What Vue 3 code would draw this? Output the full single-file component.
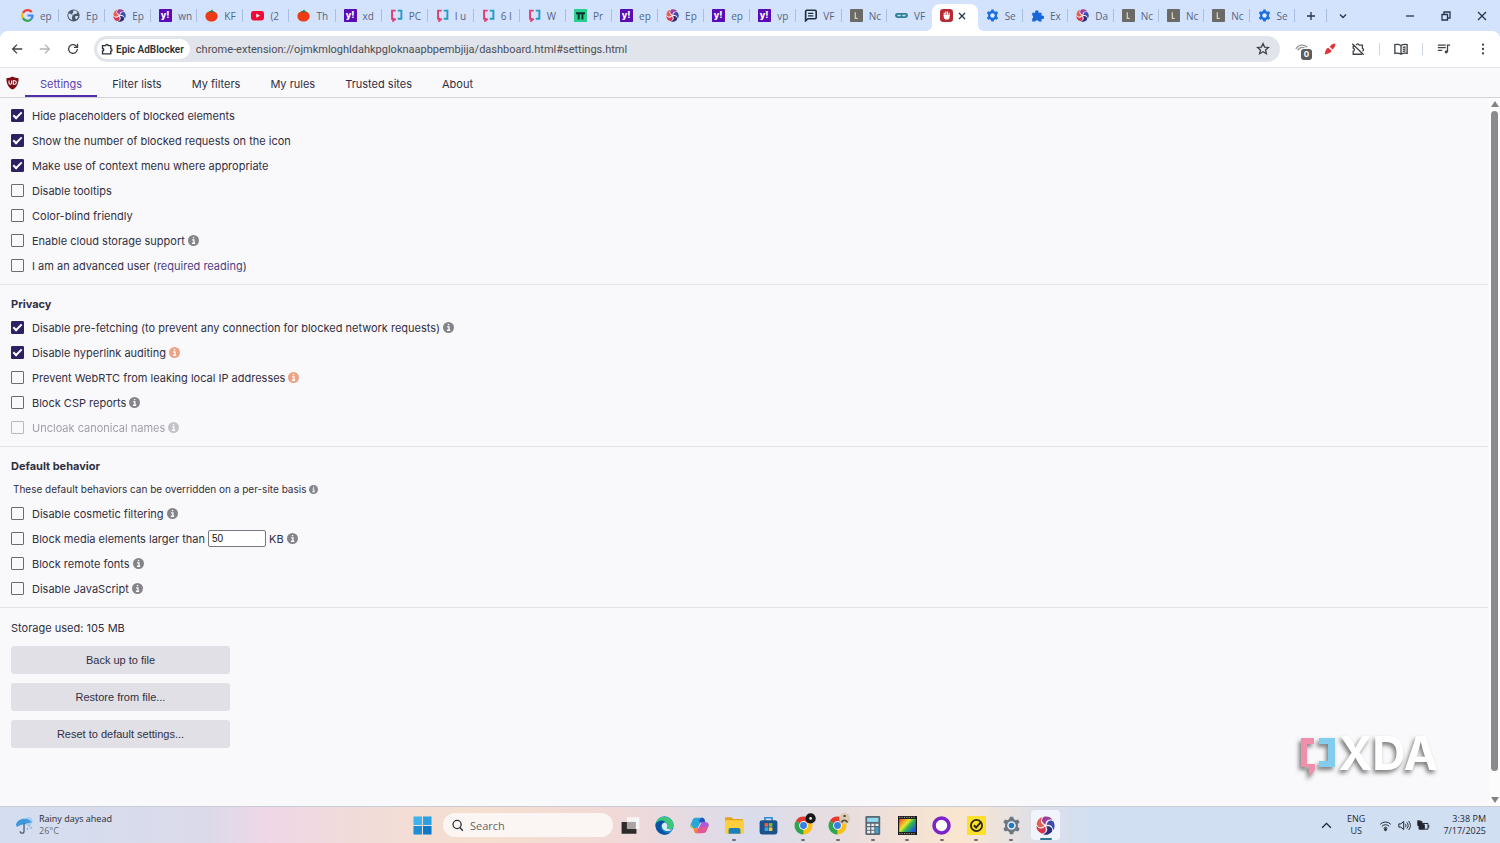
<script setup>
import { ref } from 'vue'

const arm = 'M8 7C4.700 5.600 4.200 2.600 6.600.6 9.800 0 12.600 1 13.800 3.200 10.500 2.300 8 3.800 8 7z'
const epic = `<circle cx="8" cy="8" r="7" fill="#f6eef5"/>` + ['#9b3f9c', '#3c4cb0', '#2a2f7c', '#d8344c', '#e6604f']
  .map((fill, i) => `<path d="${arm}" fill="${fill}" transform="rotate(${i * 72} 8 8)"/>`).join('')
const chrome = `<path d="M8 8 1.500 4.200a7.500 7.500 0 0 1 13 0z" fill="#e33b2e"/><path d="M8 8l6.500-3.800A7.500 7.500 0 0 1 8 15.500z" fill="#fbc116"/><path d="M8 8v7.500a7.500 7.500 0 0 1-6.500-11.300z" fill="#2da44e"/><circle cx="8" cy="8" r="3.700" fill="#fff"/><circle cx="8" cy="8" r="2.900" fill="#3b7de8"/>`

const art = {
  google: `<path d="M13.300 3.800A6.700 6.700 0 0 0 2.300 4.900" fill="none" stroke="#ea4335" stroke-width="2.800"/><path d="M2.300 4.900a6.600 6.600 0 0 0 0 6.200" fill="none" stroke="#fbbc05" stroke-width="2.800"/><path d="M2.300 11.100a6.500 6.500 0 0 0 9.700 2" fill="none" stroke="#34a853" stroke-width="2.800"/><path d="M12 13.100A6.300 6.300 0 0 0 14.200 8H8" fill="none" stroke="#4285f4" stroke-width="2.700"/>`,
  globe: `<circle cx="8" cy="8" r="7.500" fill="#4c5767"/><path d="M2 5.500 5 6l2 2-1 2 .500 3.500C4 13 1.800 11 1.700 8zM7 2.200l3-.4 3 2-1 2-3 .5-1.500 1.500L6 6l2-2zM10 9l3-.5 1 .5-2 3.500-2-1z" fill="#d3e3fd"/>`,
  epic,
  yahoo: `<rect width="16" height="16" rx="1" fill="#5a0bb5"/><text x="2" y="11.500" font-size="11" font-weight="800" fill="#fff" font-family="Inter, sans-serif">y!</text>`,
  tomato: `<path d="M8 3.500c5-1 7.500 1.500 7.500 5.300S12 15.500 8 15.500.5 12.600.5 8.800 3 2.500 8 3.500z" fill="#ef3a16"/><path d="M4 3.200 8 4.600l4-1.200-2.500-1L9 .3 7.300 2.300z" fill="#2f7d3b"/>`,
  youtube: `<rect y="2.500" width="16" height="11.500" rx="3" fill="#f00b36"/><path d="M6.500 5.500 11 8.200l-4.500 2.700z" fill="#fff"/>`,
  xda: `<path d="M7 2H2.500v10H4v2.500L7 12" fill="none" stroke="#e2406f" stroke-width="2.400"/><path d="M9.500 2H14v10H9.500" fill="none" stroke="#269cc4" stroke-width="2.400"/>`,
  pi: `<rect width="16" height="16" fill="#27d08c"/><path d="M2.500 4h11v2.400h-1.900V13H9.200V6.400H7V13H4.600V6.400H2.500z" fill="#10302a"/>`,
  chat: `<path d="M3 1.500h10.500a1.500 1.500 0 0 1 1.500 1.500v7.500a1.500 1.500 0 0 1-1.500 1.500H5l-3 2.500V3z" fill="none" stroke="#20303e" stroke-width="2"/><path d="M5 5.500h6.500M5 8.500h6.500" stroke="#20303e" stroke-width="1.500"/>`,
  note: `<rect width="16" height="16" rx="1" fill="#6b6a66"/><path d="M6.500 4v7.500h3" fill="none" stroke="#d9d3bd" stroke-width="1.500"/>`,
  pill: `<rect y="5" width="16" height="6" rx="3" fill="#2d7f9a"/><path d="M3 8h4M9 8h4" stroke="#bfe3ee" stroke-width="1.800"/>`,
  block: `<rect width="16" height="16" rx="4" fill="#b52a33"/><path d="M5.200 8V5M7.200 7.500V3.500M9.200 7.500V3.500M11.200 8V5" stroke="#fff" stroke-width="1.300" stroke-linecap="round"/><path d="M4.600 7.500h7.200v2.500c0 1.700-1.200 3-3 3H8c-2 0-3.400-1.800-3.400-3z" fill="#fff"/>`,
  gear: `<path d="M6.600.6h2.800l.5 2 1.600.9 2-.6 1.400 2.400-1.500 1.500v2.400l1.500 1.500-1.400 2.400-2-.6-1.600.9-.5 2H6.600l-.5-2-1.600-.9-2 .6-1.400-2.400 1.500-1.500V6.800L1.100 5.300l1.400-2.400 2 .6 1.600-.9z" fill="#1d6fe0"/><circle cx="8" cy="8" r="2.700" fill="#e3edfd"/>`,
  puzzle: `<path d="M1.500 4.500h3.600a2.200 2.200 0 1 1 4.200 0H13v3.700a2.200 2.200 0 1 1 0 4V15.500H9.500a2.200 2.200 0 0 0-4.300 0H1.500v-3.800a2.200 2.200 0 0 0 0-3.900z" fill="#1767d8"/>`,
  taskview: `<rect x="5" y="1" width="10.500" height="10" fill="#f6f4f4"/><path d="M.5 5H5v6h8v4H.5z" fill="#2c2a2b"/><rect x="5" y="5" width="7.500" height="6" fill="#a9a5a5"/>`,
  edge: `<circle cx="8" cy="8" r="7.700" fill="#1580cf"/><path d="M.6 6.500C2 1 8 -.8 12.500 2c3 2 4 5.500 2.500 7.800-1.200 1.600-4.200 1.600-5.200.4 1.400-1.500.8-4.700-2.300-5.200C4.500 4.500 2 5 .6 6.500z" fill="#3cc77c"/><path d="M.5 6.800C2 3.500 7 2.800 9 5.200 5.800 5 4.200 8 5.500 11c1.200 2.500 4 4 7.500 2.800C8 18 0 15 .5 6.800z" fill="#0c52a3"/><path d="M9.700 10.200c1.400-1.400.7-4.400-1.800-4.800C5 6.500 5.200 10.400 8 12c2.300 1.200 5 .9 6.700-.9-1.800.6-4 .4-5-.9z" fill="#dcebf6"/>`,
  copilot: `<path d="M5.500 1.500h4.800c1 0 1.600.6 1.900 1.500l.8 2.500H9L6 10.500H2.500C.5 10.500 0 9 .6 7l1.500-3.700C2.600 2 3.800 1.500 5.500 1.500z" fill="#28a6d9"/><path d="M9.500 1.500c1.500 0 2.300.5 2.700 1.500l.8 2.500H8.800L7.500 4z" fill="#2750c8"/><path d="M10.500 14.500H5.700c-1 0-1.600-.6-1.900-1.500L3 10.500h4L10 5.500h3.500c2 0 2.500 1.500 1.900 3.500l-1.500 3.700c-.5 1.300-1.700 1.800-3.400 1.800z" fill="#e45796"/><path d="M.6 7C0 9 .5 10.500 2.500 10.500h4L5 13.500l-1.200-.5L3 10.500z" fill="#f4c437"/><path d="M10 5.500h3.500c2 0 2.500 1.500 1.900 3.500H8z" fill="#a95ad8"/><path d="M5.700 14.500c-1 0-1.600-.6-1.900-1.500L3 10.500h4z" fill="#f7823c"/>`,
  folder: `<path d="M0 1h5.500L7 2.500h8V13H0z" fill="#e3a51c"/><rect y="3.500" width="16" height="11.500" rx="1" fill="#fdcf3d"/><path d="M3 15v-3.500a1.500 1.500 0 0 1 1.500-1.500h7a1.500 1.500 0 0 1 1.500 1.500V15z" fill="#1c7fb8"/>`,
  store: `<path d="M5 4V1.500h6V4" fill="none" stroke="#2a8fd0" stroke-width="1.400"/><rect x=".5" y="3.500" width="15" height="12" rx="2" fill="#1c528c"/><path d="M4.700 6h3v3h-3z" fill="#ee6144"/><path d="M8.300 6h3v3h-3z" fill="#7fba3e"/><path d="M4.700 9.600h3v3h-3z" fill="#35a9e0"/><path d="M8.300 9.600h3v3h-3z" fill="#fdc931"/>`,
  chromeA: chrome + `<circle cx="14" cy="2" r="4.300" fill="#181818"/><circle cx="14" cy="2" r="1.200" fill="#e8e8e8"/>`,
  chromeB: chrome + `<circle cx="14" cy="2" r="4.600" fill="#d9cbb3"/><path d="M11.500 5.500c.5-2.500 4-2.500 5 0M13 0h2" stroke="#5f5135" stroke-width="1.500" fill="none"/>`,
  calc: `<rect x="2" width="12.500" height="16" rx="1" fill="#5b6873"/><rect x="3.500" y="1.500" width="9.500" height="3.500" fill="#8ed8f0"/><path d="M3.500 6.500h2.500v2H3.500zM7 6.500h2.500v2H7zM3.500 9.500h2.500v2H3.500zM7 9.500h2.500v2H7zM3.500 12.500h2.500v2H3.500zM7 12.500h2.500v2H7zM10.500 6.500H13v2h-2.500z" fill="#e8eef2"/><path d="M10.500 9.500H13v5h-2.500z" fill="#3ba3dc"/>`,
  rainbow: `<defs><linearGradient id="rb" x2="1" y2=".7"><stop stop-color="#f0364c"/><stop offset=".25" stop-color="#f7a01f"/><stop offset=".45" stop-color="#e9e52e"/><stop offset=".65" stop-color="#31b84c"/><stop offset="1" stop-color="#2357d8"/></linearGradient></defs><rect width="16" height="16" fill="#191919"/><rect x="1" y="2.500" width="14" height="11" fill="url(#rb)"/><path d="M1 1.200h14M1 14.800h14" stroke="#999" stroke-dasharray="1 1"/>`,
  ring: `<circle cx="8" cy="8" r="6.300" fill="#fff" stroke="#7b22c9" stroke-width="3"/>`,
  norton: `<rect width="16" height="16" fill="#fbe02c"/><circle cx="8" cy="8" r="4.700" fill="none" stroke="#2b2710" stroke-width="1.500"/><path d="M5.800 7.800 7.700 9.700 12 4.800" fill="none" stroke="#2b2710" stroke-width="1.600"/>`,
  settings: `<path d="M6.600.6h2.800l.5 2 1.600.9 2-.6 1.400 2.400-1.500 1.500v2.400l1.500 1.500-1.400 2.400-2-.6-1.600.9-.5 2H6.600l-.5-2-1.600-.9-2 .6-1.400-2.400 1.500-1.500V6.800L1.100 5.300l1.400-2.400 2 .6 1.600-.9z" fill="#6c7782"/><circle cx="8" cy="8" r="3.600" fill="#e6edf3"/><circle cx="8" cy="8" r="2.300" fill="#1e7ac4"/>`,
}

const tabs = [
  ['google', 'ep'], ['globe', 'Ep'], ['epic', 'Ep'], ['yahoo', 'wn'], ['tomato', 'KF'], ['youtube', '(2'],
  ['tomato', 'Th'], ['yahoo', 'xd'], ['xda', 'PC'], ['xda', 'I u'], ['xda', '6 I'], ['xda', 'W'], ['pi', 'Pr'],
  ['yahoo', 'ep'], ['epic', 'Ep'], ['yahoo', 'ep'], ['yahoo', 'vp'], ['chat', 'VF'], ['note', 'Nc'], ['pill', 'VF'],
  ['block', ''], ['gear', 'Se'], ['puzzle', 'Ex'], ['epic', 'Da'], ['note', 'Nc'], ['note', 'Nc'], ['note', 'Nc'], ['gear', 'Se'],
].map(([icon, title], i) => ({ icon, title, wide: i < 17, active: icon === 'block', bare: icon === 'pill' }))

const pages = ['Settings', 'Filter lists', 'My filters', 'My rules', 'Trusted sites', 'About']
const page = ref('Settings')

const general = ref([
  { id: 'hide', text: 'Hide placeholders of blocked elements', on: true },
  { id: 'badge', text: 'Show the number of blocked requests on the icon', on: true },
  { id: 'menu', text: 'Make use of context menu where appropriate', on: true },
  { id: 'tips', text: 'Disable tooltips', on: false },
  { id: 'color', text: 'Color-blind friendly', on: false },
  { id: 'cloud', text: 'Enable cloud storage support', on: false, info: 'plain' },
  { id: 'adv', text: 'I am an advanced user', on: false, link: 'required reading' },
])
const privacy = ref([
  { id: 'prefetch', text: 'Disable pre-fetching (to prevent any connection for blocked network requests)', on: true, info: 'plain' },
  { id: 'audit', text: 'Disable hyperlink auditing', on: true, info: 'warm' },
  { id: 'rtc', text: 'Prevent WebRTC from leaking local IP addresses', on: false, info: 'warm' },
  { id: 'csp', text: 'Block CSP reports', on: false, info: 'plain' },
  { id: 'cname', text: 'Uncloak canonical names', on: false, info: 'plain', disabled: true },
])
const behavior = ref([
  { id: 'cosmetic', text: 'Disable cosmetic filtering', on: false, info: 'plain' },
  { id: 'media', text: 'Block media elements larger than', on: false, info: 'plain', size: 50 },
  { id: 'fonts', text: 'Block remote fonts', on: false, info: 'plain' },
  { id: 'js', text: 'Disable JavaScript', on: false, info: 'plain' },
])
const sections = [
  { key: 'general', rows: general },
  { key: 'privacy', title: 'Privacy', rows: privacy },
  { key: 'behavior', title: 'Default behavior', note: 'These default behaviors can be overridden on a per-site basis', rows: behavior },
]

const apps = [
  { icon: 'taskview', name: 'Task view' }, { icon: 'edge', name: 'Edge' }, { icon: 'copilot', name: 'Copilot' },
  { icon: 'folder', name: 'Files', run: true }, { icon: 'store', name: 'Store' }, { icon: 'chromeA', name: 'Chrome', run: true },
  { icon: 'chromeB', name: 'Chrome', run: true }, { icon: 'calc', name: 'Calculator', run: true }, { icon: 'rainbow', name: 'Video', run: true },
  { icon: 'ring', name: 'Ring', run: true }, { icon: 'norton', name: 'Security', run: true }, { icon: 'settings', name: 'Settings', run: true },
  { icon: 'epic', name: 'Epic', run: true, front: true },
]
</script>

<template>
  <div class="screen">
    <header class="strip">
      <div class="tabs">
        <div v-for="(t, i) in tabs" :key="i" class="tab" :class="{ wide: t.wide, active: t.active, bare: t.bare }">
          <svg class="fav" viewBox="0 0 16 16" v-html="art[t.icon]"></svg>
          <span v-if="!t.active" class="tab-title">{{ t.title }}</span>
          <button v-else class="tab-close" aria-label="Close tab">
            <svg viewBox="0 0 12 12"><path d="M3 3l6 6M9 3l-6 6" /></svg>
          </button>
        </div>
      </div>
      <button class="new-tab" aria-label="New tab"><svg viewBox="0 0 12 12"><path d="M6 2v8M2 6h8" /></svg></button>
      <button class="list-tabs" aria-label="Search tabs"><svg viewBox="0 0 12 12"><path d="M3 4.500l3 3 3-3" /></svg></button>
      <div class="window-buttons">
        <button aria-label="Minimize"><svg viewBox="0 0 12 12"><path d="M2 6h8" /></svg></button>
        <button aria-label="Restore"><svg viewBox="0 0 12 12"><path d="M2 4.500h5.500V10H2zM4 4V2h6v6H8" /></svg></button>
        <button aria-label="Close"><svg viewBox="0 0 12 12"><path d="M2 2l8 8M10 2l-8 8" /></svg></button>
      </div>
    </header>

    <div class="toolbar">
      <button class="tool" aria-label="Back"><svg viewBox="0 0 16 16"><path d="M14 8H3M8 3 3 8l5 5" /></svg></button>
      <button class="tool faded" aria-label="Forward"><svg viewBox="0 0 16 16"><path d="M2 8h11M8 3l5 5-5 5" /></svg></button>
      <button class="tool" aria-label="Reload"><svg viewBox="0 0 16 16"><path d="M13 8a5 5 0 1 1-1.500-3.600L13 6M13.200 2v4.200H9" /></svg></button>
      <div class="address">
        <span class="chip">
          <svg viewBox="0 0 16 16"><path d="M2 3.500h4.200a1.700 1.700 0 0 1 3.400 0H13v4a1.700 1.700 0 0 1 0 3.400v3.600H2v-3.800a1.700 1.700 0 0 0 0-3.400z" /></svg>
          Epic AdBlocker
        </span>
        <input class="url" aria-label="Address" value="chrome-extension://ojmkmloghldahkpgloknaapbpembjija/dashboard.html#settings.html">
        <button class="star" aria-label="Bookmark"><svg viewBox="0 0 16 16"><path d="M8 1.800l1.800 4 4.400.4-3.300 2.900 1 4.300L8 11.100l-3.900 2.300 1-4.300L1.800 6.200l4.400-.4z" /></svg></button>
      </div>
      <div class="tools">
        <button class="tool badge-host" aria-label="Blocked requests">
          <svg viewBox="0 0 16 16"><path d="M1 8c3-5 9-6 13-2M3 9.500c2-3 5-4 8-3" class="gray" /></svg>
          <span class="count">0</span>
        </button>
        <button class="tool" aria-label="Cleaner">
          <svg viewBox="0 0 16 16"><path d="M8.500 4.500C10 2.500 12 2 14 1.800c.3 2-.2 4-2 5.700L11 8.500 7.500 5.500zM6 6.500 9.800 10 8.500 12C6.500 13 4 13.800 2 14.200c.2-2 .7-4.500 2-6.500z" class="red" /></svg>
        </button>
        <button class="tool" aria-label="Extensions">
          <svg viewBox="0 0 16 16"><path d="M6 3.500a1.700 1.700 0 0 1 3.300 0H13v3.700a1.700 1.700 0 0 1 0 3.300M12.500 14H2.500v-3.500a1.800 1.800 0 0 0 0-3.500V4.200M1.500 2l13 12.500" /></svg>
        </button>
        <i class="rule"></i>
        <button class="tool" aria-label="Reading mode">
          <svg viewBox="0 0 16 16"><path d="M8 4C6 2.700 3.500 2.500 1 3v10c2.500-.5 5-.3 7 1 2-1.300 4.500-1.500 7-1V3c-2.500-.5-5-.3-7 1zv10M10 6.200l3.200-.5M10 8.500l3.200-.5M10 10.800l3.200-.5" /></svg>
        </button>
        <i class="rule"></i>
        <button class="tool" aria-label="Media">
          <svg viewBox="0 0 16 16"><path d="M1 3.500h9M1 6.500h9M1 9.500h5M12 11.500V3.500h3" /><circle cx="10.500" cy="11.500" r="1.700" class="ink" /></svg>
        </button>
        <button class="tool menu" aria-label="Menu">
          <svg viewBox="0 0 16 16"><circle cx="8" cy="3" r="1.300" class="ink" /><circle cx="8" cy="8" r="1.300" class="ink" /><circle cx="8" cy="13" r="1.300" class="ink" /></svg>
        </button>
      </div>
    </div>

    <nav class="pages">
      <svg class="shield" viewBox="0 0 16 16">
        <path d="M8 0c2.500 1.500 5 2 7.500 2 0 6-1.500 11-7.500 14C2 13 .5 8 .5 2 3 2 5.500 1.500 8 0z" fill="#7c0d14" />
        <path d="M3.700 5v3a1.600 1.600 0 0 0 3.200 0V5M9 5.200v4.300h1.500a2.100 2.100 0 0 0 0-4.300z" fill="none" stroke="#fff" stroke-width="1.300" />
      </svg>
      <button v-for="p in pages" :key="p" :class="{ current: p === page }" @click="page = p">{{ p }}</button>
    </nav>

    <div class="view">
      <main>
        <section v-for="s in sections" :key="s.key" :class="s.key">
          <h2 v-if="s.title">{{ s.title }}</h2>
          <p v-if="s.note" class="note">
            {{ s.note }}
            <svg class="info small" viewBox="0 0 12 12"><circle cx="6" cy="6" r="6" /><path d="M4.500 5.200H6.500V9M4.300 9h3.500M5.300 2.900h1.500" /></svg>
          </p>
          <div v-for="r in s.rows.value" :key="r.id" class="row" :class="{ disabled: r.disabled }">
            <input :id="r.id" v-model="r.on" type="checkbox" :disabled="r.disabled">
            <label :for="r.id">{{ r.text }}</label>
            <span v-if="r.link" class="paren">(<a href="#advanced">{{ r.link }}</a>)</span>
            <template v-if="r.size">
              <input id="media-size" v-model="r.size" class="size" type="text">
              <label for="media-size">KB</label>
            </template>
            <svg v-if="r.info" class="info" :class="r.info" viewBox="0 0 12 12"><circle cx="6" cy="6" r="6" /><path d="M4.500 5.200H6.500V9M4.300 9h3.500M5.300 2.900h1.500" /></svg>
          </div>
        </section>
        <section class="storage">
          <p>Storage used: 105 MB</p>
          <button>Back up to file</button>
          <button>Restore from file...</button>
          <button>Reset to default settings...</button>
        </section>
      </main>
      <div class="scrollbar">
        <i class="arrow up"></i>
        <i class="thumb"></i>
        <i class="arrow down"></i>
      </div>
      <div class="watermark">
        <svg viewBox="0 0 40 44">
          <path d="M16 2H3v29h8v10l6-7v-6H9V8h7z" fill="#f08fab" />
          <path d="M21 2h16v29H21v-6h9V8h-9z" fill="#82cdee" />
        </svg>
        <span>XDA</span>
      </div>
    </div>

    <footer class="taskbar">
      <div class="weather">
        <svg viewBox="0 0 20 20"><circle cx="14" cy="6" r="4.500" fill="#a9cdf0" /><path d="M1 9.500C3 3 12 1 18 7l-4 1-4 1-4 1-4 2z" fill="#3f98dd" /><path d="M9.500 8v8.500a2 2 0 0 1-4 0" fill="none" stroke="#4d6178" stroke-width="1.400" /><path d="M15 10v2M17 12v2M13 13v2" stroke="#5ba6df" /></svg>
        <div><b>Rainy days ahead</b><span>26°C</span></div>
      </div>
      <button class="start" aria-label="Start">
        <svg viewBox="0 0 20 20"><path d="M.5.5h9v9h-9z" fill="#41b3ec" /><path d="M10.500.5h9v9h-9z" fill="#2ba0e0" /><path d="M.5 10.500h9v9h-9z" fill="#1b8ed6" /><path d="M10.500 10.500h9v9h-9z" fill="#0b78c8" /></svg>
      </button>
      <label class="search">
        <svg viewBox="0 0 16 16"><circle cx="7.500" cy="6.800" r="5" /><path d="M11 10.500l3.500 4" /></svg>
        <input type="text" placeholder="Search" aria-label="Search">
      </label>
      <div class="apps">
        <button v-for="(a, i) in apps" :key="i" :class="{ run: a.run, front: a.front }" :aria-label="a.name">
          <svg viewBox="0 0 16 16" v-html="art[a.icon]"></svg>
        </button>
      </div>
      <div class="tray">
        <svg class="chev" viewBox="0 0 12 12"><path d="M2 8l4-4 4 4" /></svg>
        <span class="lang">ENG<br>US</span>
        <svg viewBox="0 0 16 16"><path d="M1.500 6.500a9 9 0 0 1 13 0M3.500 9a6.200 6.200 0 0 1 9 0M5.700 11.300a3.200 3.200 0 0 1 4.600 0" /><circle cx="8" cy="13" r="1.300" class="ink" /></svg>
        <svg viewBox="0 0 16 16"><path d="M1 6h2.500L7 3v10l-3.500-3H1zM9 6c1 1.200 1 2.800 0 4M11 4.200c2 2.300 2 5.300 0 7.600M13 2.500c3 3.300 3 7.700 0 11" /></svg>
        <svg viewBox="0 0 16 16"><path d="M2.500 5.500h11v7h-11zM14.500 7.500v3" /><path d="M3 7h6v5H3zM1 2l5 1v5H1z" class="ink" /></svg>
        <span class="clock">3:38 PM<br>7/17/2025</span>
      </div>
    </footer>
  </div>
</template>

<style>
body {
  margin: 0;
  background: #f9f9fb;
}
</style>

<style scoped>
.screen {
  display: flex;
  flex-direction: column;
  min-height: 100vh;
  font-family: Inter, "Liberation Sans", sans-serif;
  font-size: 11px;
  color: #312f42;
  background: #f9f9fb;
}
button {
  padding: 0;
  border: 0;
  background: none;
  font: inherit;
  color: inherit;
}
input {
  box-sizing: border-box;
  margin: 0;
  font: inherit;
  color: inherit;
}
svg {
  display: block;
  flex: none;
}

.strip {
  display: flex;
  height: 31px;
  padding-left: 13px;
  background: #d3e3fd;
  color: #24344a;
}
.strip button {
  display: grid;
  place-items: center;
}
.strip button svg {
  width: 12px;
  height: 12px;
  fill: none;
  stroke: currentColor;
  stroke-width: 1.3;
}
.tabs {
  display: flex;
  flex: 1;
  min-width: 0;
}
.tab {
  position: relative;
  display: flex;
  align-items: center;
  gap: 6px;
  flex: 50 1 0;
  min-width: 0;
  box-sizing: border-box;
  padding-left: 8px;
}
.tab.wide {
  flex-grow: 51;
}
.tab::after,
.new-tab::after {
  content: "";
  position: absolute;
  right: 0;
  top: 9px;
  width: 1px;
  height: 13px;
  background: #a9bfe2;
}
.fav {
  width: 13px;
  height: 13px;
}
.tab-title {
  white-space: nowrap;
  font: 10px/16px "Open Sans", "Noto Sans", sans-serif;
  color: #55657f;
}
.tab.bare::after {
  display: none;
}
.tab.active {
  align-self: flex-end;
  height: 27px;
  padding-bottom: 4px;
  gap: 3px;
  background: #fff;
  border-radius: 8px 8px 0 0;
}
.tab.active::before,
.tab.active::after {
  content: "";
  position: absolute;
  top: auto;
  bottom: 0;
  width: 6px;
  height: 6px;
}
.tab.active::before {
  left: -6px;
  background: radial-gradient(circle at 0 0, #d3e3fd 6px, #fff 6px);
}
.tab.active::after {
  right: -6px;
  background: radial-gradient(circle at 100% 0, #d3e3fd 6px, #fff 6px);
}
.tab-close svg {
  stroke: #1c2430;
}
.new-tab {
  position: relative;
  width: 32px;
}
.list-tabs {
  width: 32px;
}
.window-buttons {
  display: flex;
  margin-left: 33px;
}
.window-buttons button {
  width: 36px;
}

.toolbar {
  display: flex;
  align-items: center;
  height: 36px;
  padding: 0 3px;
  background: linear-gradient(#d3e3fd 8px, #fff 8px);
  border-bottom: 1px solid #e6e6e9;
  position: relative;
  isolation: isolate;
}
.toolbar::before {
  content: "";
  position: absolute;
  inset: 0;
  z-index: -1;
  background: #fff;
  border-radius: 8px 8px 0 0;
}
.tool {
  display: grid;
  place-items: center;
  width: 28px;
  height: 28px;
}
.tool svg,
.star svg {
  width: 14px;
  height: 14px;
  fill: none;
  stroke: #3f4347;
  stroke-width: 1.5;
}
.tool.faded svg {
  stroke: #b1b4b8;
}
.tool svg .ink {
  fill: #3f4347;
  stroke: none;
}
.tool svg .gray {
  stroke: #999;
}
.tool svg .red {
  fill: #e0373c;
  stroke: none;
}
.address {
  display: flex;
  align-items: center;
  flex: 1;
  height: 26px;
  margin-left: 7px;
  padding: 0 3px;
  box-sizing: border-box;
  border-radius: 13px;
  background: #e1e4eb;
  font-family: Roboto, "Noto Sans", sans-serif;
}
.chip {
  display: flex;
  align-items: center;
  gap: 3px;
  height: 20px;
  padding: 0 6px 0 4px;
  border-radius: 10px;
  background: #fff;
  font-size: 10px;
  font-weight: 600;
  color: #2c3036;
  white-space: nowrap;
}
.chip svg {
  width: 12px;
  height: 12px;
  fill: none;
  stroke: #2c3036;
  stroke-width: 1.8;
}
.url {
  flex: 1;
  min-width: 0;
  padding: 0 0 0 6px;
  border: 0;
  outline: 0;
  background: none;
  color: #4a4e56;
}
.star {
  display: grid;
  place-items: center;
  width: 28px;
  height: 26px;
}
.tools {
  display: flex;
  align-items: center;
  margin-left: 8px;
}
.rule {
  width: 1px;
  height: 12px;
  margin: 0 7px;
  background: #cdd5e0;
}
.menu {
  margin-left: 11px;
}
.badge-host {
  position: relative;
}
.count {
  position: absolute;
  right: 4px;
  bottom: 3px;
  width: 11px;
  height: 11px;
  border-radius: 3px;
  background: #5c5c5e;
  color: #fff;
  font-size: 8px;
  font-weight: 700;
  line-height: 11px;
}

.pages {
  display: flex;
  height: 29px;
  padding-left: 6px;
  border-bottom: 1px solid #d2d2d8;
}
.shield {
  width: 13px;
  height: 14px;
  margin: 8px 6px 0 0;
}
.pages button {
  padding: 4px 15px 0;
  border-bottom: 2px solid transparent;
}
.pages button.current {
  color: #5b3fb0;
  border-bottom-color: #4f30a8;
}

.view {
  position: relative;
  display: flex;
  flex: 1;
}
main {
  flex: 1;
}
section {
  padding: 6px 11px;
  border-bottom: 1px solid #e3e3e7;
}
h2,
p {
  margin: 0;
  font-size: 11px;
}
h2 {
  line-height: 22px;
  font-weight: 700;
}
.general {
  padding-top: 5px;
}
.privacy,
.behavior {
  padding-top: 8px;
}
.note {
  display: flex;
  align-items: center;
  gap: 3px;
  height: 24px;
  padding-left: 2px;
  font-size: 10px;
}
.row {
  display: flex;
  align-items: center;
  gap: 3px;
  height: 25px;
}
.row.disabled {
  opacity: 0.45;
}
input[type="checkbox"] {
  position: relative;
  appearance: none;
  width: 13px;
  height: 13px;
  margin-right: 5px;
  border: 1px solid #6b6b76;
  border-radius: 1px;
}
input[type="checkbox"]:checked {
  background: #2b2163;
  border-color: #2b2163;
}
input[type="checkbox"]:checked::before {
  content: "";
  position: absolute;
  left: 1px;
  top: 2px;
  width: 7px;
  height: 3px;
  border: solid #fff;
  border-width: 0 0 2px 2px;
  transform: rotate(-45deg);
}
a {
  color: #4b3f86;
  text-decoration: none;
}
.info {
  width: 11px;
  height: 11px;
  fill: #84848a;
}
.info.warm {
  fill: #eda383;
}
.info.small {
  width: 9px;
  height: 9px;
}
.info path {
  fill: none;
  stroke: #fff;
  stroke-width: 1.4;
}
.size {
  width: 58px;
  height: 17px;
  padding: 0 3px;
  border: 1px solid #77777e;
  border-radius: 2px;
  background: #fff;
  font: 10px "Liberation Sans", sans-serif;
  color: #111;
}
.storage {
  display: flex;
  flex-direction: column;
  align-items: flex-start;
  gap: 9px;
  border-bottom: 0;
  padding-top: 11px;
}
.storage p {
  line-height: 18px;
}
.storage button {
  width: 219px;
  height: 28px;
  border-radius: 3px;
  background: #e0e0e6;
  font-family: "Liberation Sans", sans-serif;
}
.scrollbar {
  display: flex;
  flex-direction: column;
  align-items: center;
  width: 11px;
  margin-left: 1px;
  padding: 3px 0;
  box-sizing: border-box;
  background: #fcfcfd;
}
.arrow {
  border: 4px solid transparent;
}
.arrow.up {
  border-top: 0;
  border-bottom: 6px solid #838387;
}
.arrow.down {
  margin-top: auto;
  border-bottom: 0;
  border-top: 6px solid #838387;
}
.thumb {
  flex: 0 0 94%;
  width: 7px;
  margin-top: 4px;
  border-radius: 4px;
  background: #8b8b8d;
}
.watermark {
  position: absolute;
  right: 62px;
  bottom: 26px;
  display: flex;
  align-items: flex-start;
  filter: drop-shadow(-2px 3px 2px rgba(0, 0, 0, 0.5));
}
.watermark svg {
  width: 40px;
  height: 44px;
}
.watermark span {
  color: #fff;
  font-size: 46px;
  font-weight: 700;
  line-height: 34px;
}

.taskbar {
  display: flex;
  align-items: center;
  height: 36px;
  border-top: 1px solid #c9ccd6;
  background: linear-gradient(90deg, #d3def0 0, #dcdaea 14%, #efd7e7 18%, #f1dbda 23%, #f5dfcf 32%, #f1d9d7 41%, #dadcec 50%, #ecdedb 58%, #fae6cf 64%, #dfdfe8 69%, #d1dff3 73%);
  font-family: "Open Sans", "Noto Sans", sans-serif;
  font-size: 9px;
  color: #262a33;
}
.weather {
  display: flex;
  align-items: center;
  gap: 5px;
  flex: 0 0 27%;
  box-sizing: border-box;
  padding-left: 15px;
}
.weather svg {
  width: 19px;
  height: 20px;
}
.weather b,
.weather span {
  display: block;
  line-height: 12px;
  font-weight: 500;
}
.weather span {
  color: #5f6878;
}
.start {
  display: grid;
  place-items: center;
  width: 34px;
}
.start svg {
  width: 19px;
  height: 19px;
}
.search {
  display: flex;
  align-items: center;
  gap: 6px;
  width: 170px;
  height: 24px;
  box-sizing: border-box;
  margin-left: 4px;
  padding: 0 8px;
  border-radius: 12px;
  background: #fbf6f3;
}
.search svg {
  width: 13px;
  height: 13px;
  fill: none;
  stroke: #2d3037;
  stroke-width: 1.6;
}
.search input {
  width: 100%;
  min-width: 0;
  padding: 0;
  border: 0;
  outline: 0;
  background: none;
  font-size: 11px;
}
.search input::placeholder {
  color: #646468;
}
.apps {
  display: flex;
  flex: 0 0 30%;
  align-self: stretch;
}
.apps button {
  position: relative;
  display: grid;
  place-items: center;
  flex: 1;
}
.apps svg {
  position: relative;
  width: 19px;
  height: 19px;
  overflow: visible;
}
.apps .front::before {
  content: "";
  position: absolute;
  inset: 3px;
  border-radius: 4px;
  background: #f1f5fb;
}
.apps .run::after {
  content: "";
  position: absolute;
  bottom: 2px;
  left: calc(50% - 2px);
  width: 4px;
  height: 2px;
  border-radius: 1px;
  background: #6f6c77;
}
.apps .front::after {
  bottom: 3px;
  left: calc(50% - 6px);
  width: 12px;
  background: #2f7890;
}
.tray {
  display: flex;
  align-items: center;
  gap: 6px;
  margin-left: auto;
  padding-right: 14px;
  line-height: 12px;
}
.tray svg {
  width: 13px;
  height: 13px;
  fill: none;
  stroke: #20242c;
  stroke-width: 1.2;
}
.tray .ink {
  fill: #20242c;
}
.lang {
  margin: 0 8px;
  text-align: center;
}
.clock {
  margin-left: 7px;
  text-align: right;
}
</style>
